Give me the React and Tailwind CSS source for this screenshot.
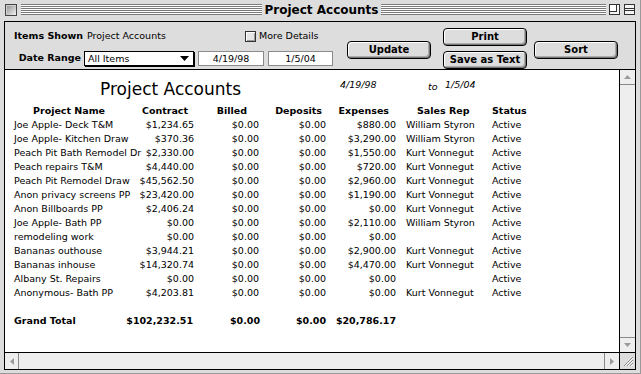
import React from 'react';

const rows = [
  ['Joe Apple- Deck T&M', '$1,234.65', '$0.00', '$0.00', '$880.00', 'William Styron', 'Active'],
  ['Joe Apple- Kitchen Draw', '$370.36', '$0.00', '$0.00', '$3,290.00', 'William Styron', 'Active'],
  ['Peach Pit Bath Remodel Dr', '$2,330.00', '$0.00', '$0.00', '$1,550.00', 'Kurt Vonnegut', 'Active'],
  ['Peach repairs T&M', '$4,440.00', '$0.00', '$0.00', '$720.00', 'Kurt Vonnegut', 'Active'],
  ['Peach Pit Remodel Draw', '$45,562.50', '$0.00', '$0.00', '$2,960.00', 'Kurt Vonnegut', 'Active'],
  ['Anon privacy screens PP', '$23,420.00', '$0.00', '$0.00', '$1,190.00', 'Kurt Vonnegut', 'Active'],
  ['Anon Billboards PP', '$2,406.24', '$0.00', '$0.00', '$0.00', 'Kurt Vonnegut', 'Active'],
  ['Joe Apple- Bath PP', '$0.00', '$0.00', '$0.00', '$2,110.00', 'William Styron', 'Active'],
  ['remodeling work', '$0.00', '$0.00', '$0.00', '$0.00', '', 'Active'],
  ['Bananas outhouse', '$3,944.21', '$0.00', '$0.00', '$2,900.00', 'Kurt Vonnegut', 'Active'],
  ['Bananas inhouse', '$14,320.74', '$0.00', '$0.00', '$4,470.00', 'Kurt Vonnegut', 'Active'],
  ['Albany St. Repairs', '$0.00', '$0.00', '$0.00', '$0.00', '', 'Active'],
  ['Anonymous- Bath PP', '$4,203.81', '$0.00', '$0.00', '$0.00', 'Kurt Vonnegut', 'Active'],
];

const headers = ['Project Name', 'Contract', 'Billed', 'Deposits', 'Expenses', 'Sales Rep', 'Status'];

// column alignment for the report rows and for the header labels
const cellCls = ['pl-[4px]', 'pr-[2px] flex justify-end', 'pr-[2px] flex justify-end', 'pr-[2px] flex justify-end', 'pr-[2px] flex justify-end', 'pl-[8px]', 'pl-[4px]'];
const headCls = ['pl-[23px]', 'pr-[8px] text-right', 'pr-[14px] text-right', 'pr-[6px] text-right', 'pr-[9px] text-right', 'pl-[19px]', 'pl-[4px]'];

const gridCols = 'grid grid-cols-[126px_60px_65px_67px_70px_90px_72px] h-[14px] leading-[14px] whitespace-nowrap';

function Stripes({ className = '' }) {
  return <div className={`h-[11px] bg-[repeating-linear-gradient(to_bottom,#7a7a7a_0px,#7a7a7a_1px,#ffffff_1px,#ffffff_2px)] ${className}`} />;
}

function MacButton({ children }) {
  return (
    <div className="w-[84px] h-[18px] rounded-[4px] border border-black bg-[#dddddd] shadow-[inset_1px_1px_0_#ffffff,inset_-1px_-1px_0_#777777,inset_-2px_-2px_0_#aaaaaa] flex items-center justify-center text-[10px] font-bold leading-none">
      {children}
    </div>
  );
}

function DateBox({ children, w }) {
  return (
    <div className={`${w} h-[15px] ml-[4px] border border-[#8a8a8a] bg-white flex items-center justify-center text-[9.5px] leading-none`}>
      {children}
    </div>
  );
}

export default function App() {
  return (
    <div className="w-[641px] h-[374px] bg-[#dddddd] border-r border-b border-[#999999] flex flex-col text-black font-['DejaVu_Sans',sans-serif] select-none overflow-hidden">
      {/* title bar */}
      <div className="h-[21px] flex items-start pt-[4px] pl-[5px] pr-[5px]">
        <div className="w-[12px] h-[12px] border border-[#444444] bg-[linear-gradient(135deg,#8c8c8c,#f2f2f2)] shadow-[inset_1px_1px_0_#cfcfcf]" />
        <div className="flex-1 flex items-start ml-[4px]">
          <Stripes className="w-[241px]" />
          <div className="w-[119px] text-center text-[12px] font-bold leading-[12px]">Project Accounts</div>
          <Stripes className="flex-1" />
        </div>
        <svg className="ml-[3px]" width="11" height="11" viewBox="0 0 11 11">
          <rect x="0.5" y="0.5" width="10" height="10" fill="#f4f4f4" stroke="#333" />
          <rect x="0.5" y="0.5" width="7" height="7" fill="#ffffff" stroke="#333" />
        </svg>
        <svg className="ml-[4px]" width="11" height="11" viewBox="0 0 11 11">
          <rect x="0.5" y="0.5" width="10" height="10" fill="#f4f4f4" stroke="#333" />
          <line x1="0" y1="4.5" x2="11" y2="4.5" stroke="#333" />
          <line x1="0" y1="6.5" x2="11" y2="6.5" stroke="#333" />
        </svg>
      </div>

      {/* window content */}
      <div className="flex-1 ml-[4px] mr-[4px] mb-[3px] border border-black flex flex-col">
        {/* control panel */}
        <div className="h-[48px] border-b border-black bg-[#dddddd] flex items-start text-[9.5px]">
          <div className="pl-[9px] pt-[7px]">
            <div className="h-[14px] flex items-center whitespace-nowrap">
              <span className="w-[73px] font-bold">Items Shown</span>
              <span className="w-[158px]">Project Accounts</span>
              <span className="w-[11px] h-[11px] border border-[#333333] bg-[#e6e6e6] shadow-[inset_1px_1px_0_#ffffff,inset_-1px_-1px_0_#9a9a9a]" />
              <span className="ml-[3px]">More Details</span>
            </div>
            <div className="mt-[8px] flex items-center whitespace-nowrap">
              <span className="w-[70px] pr-[3px] text-right font-bold">Date Range</span>
              <div className="w-[110px] h-[15px] border border-black bg-white shadow-[1px_1px_0_#000000] flex items-center pl-[3px] pr-[4px]">
                <span className="flex-1 leading-none">All Items</span>
                <svg width="9" height="5" viewBox="0 0 9 5"><path d="M0 0h9L4.5 5z" fill="#000" /></svg>
              </div>
              <DateBox w="w-[66px]">4/19/98</DateBox>
              <DateBox w="w-[65px]">1/5/04</DateBox>
            </div>
          </div>
          <div className="ml-[14px] mt-[19px]">
            <MacButton>Update</MacButton>
          </div>
          <div className="ml-[12px] mt-[6px] flex flex-col gap-[5px]">
            <MacButton>Print</MacButton>
            <MacButton>Save as Text</MacButton>
          </div>
          <div className="ml-[7px] mt-[19px]">
            <MacButton>Sort</MacButton>
          </div>
        </div>

        {/* report + vertical scrollbar */}
        <div className="flex-1 flex min-h-0">
          <div className="flex-1 bg-white pt-[9px] text-[9.5px]">
            <div className="h-[20px] flex items-start pl-[95px] whitespace-nowrap">
              <span className="w-[240px] text-[17px] leading-[20px]">Project Accounts</span>
              <span className="w-[88px] italic leading-[11px]">4/19/98</span>
              <span className="w-[17px] italic leading-[11px] mt-[2px]">to</span>
              <span className="italic leading-[11px]">1/5/04</span>
            </div>
            <div className="ml-[5px] mt-[5px]">
              <div className={`${gridCols} font-bold`}>
                {headers.map((h, i) => (
                  <div key={h} className={headCls[i]}>{h}</div>
                ))}
              </div>
              {rows.map((r) => (
                <div key={r[0]} className={gridCols}>
                  {r.map((c, i) => (
                    <div key={i} className={cellCls[i]}>{c}</div>
                  ))}
                </div>
              ))}
              <div className="h-[14px]" />
              <div className={`${gridCols} font-bold`}>
                <div className="pl-[4px]">Grand Total</div>
                <div className="pr-[3px] flex justify-end">$102,232.51</div>
                <div className="pr-[1px] flex justify-end">$0.00</div>
                <div className="pr-[2px] flex justify-end">$0.00</div>
                <div className="pr-[2px] flex justify-end">$20,786.17</div>
              </div>
            </div>
          </div>
          <div className="w-[16px] border-l border-black bg-[#eeeeee] flex flex-col">
            <div className="h-[15px] border-b border-[#8a8a8a] flex items-center justify-center">
              <svg width="7" height="4" viewBox="0 0 7 4"><path d="M3.5 0L7 4H0z" fill="#9a9a9a" /></svg>
            </div>
            <div className="flex-1" />
            <div className="h-[15px] border-t border-[#8a8a8a] flex items-center justify-center">
              <svg width="7" height="4" viewBox="0 0 7 4"><path d="M0 0h7L3.5 4z" fill="#9a9a9a" /></svg>
            </div>
          </div>
        </div>

        {/* horizontal scrollbar + grow box */}
        <div className="h-[17px] border-t border-black flex">
          <div className="flex-1 bg-[#eeeeee] flex">
            <div className="w-[14px] border-r border-[#8a8a8a] flex items-center justify-center">
              <svg width="4" height="7" viewBox="0 0 4 7"><path d="M0 3.5L4 0v7z" fill="#9a9a9a" /></svg>
            </div>
            <div className="flex-1" />
            <div className="w-[15px] border-l border-[#8a8a8a] flex items-center justify-center">
              <svg width="4" height="7" viewBox="0 0 4 7"><path d="M4 3.5L0 0v7z" fill="#9a9a9a" /></svg>
            </div>
          </div>
          <div className="w-[16px] border-l border-black bg-[#dddddd] flex items-center justify-center">
            <svg width="12" height="12" viewBox="0 0 12 12">
              <path d="M11 3L3 11M11 6L6 11M11 9L9 11" stroke="#ffffff" strokeWidth="1" />
              <path d="M11 2L2 11M11 5L5 11M11 8L8 11" stroke="#8a8a8a" strokeWidth="1" />
            </svg>
          </div>
        </div>
      </div>
    </div>
  );
}
